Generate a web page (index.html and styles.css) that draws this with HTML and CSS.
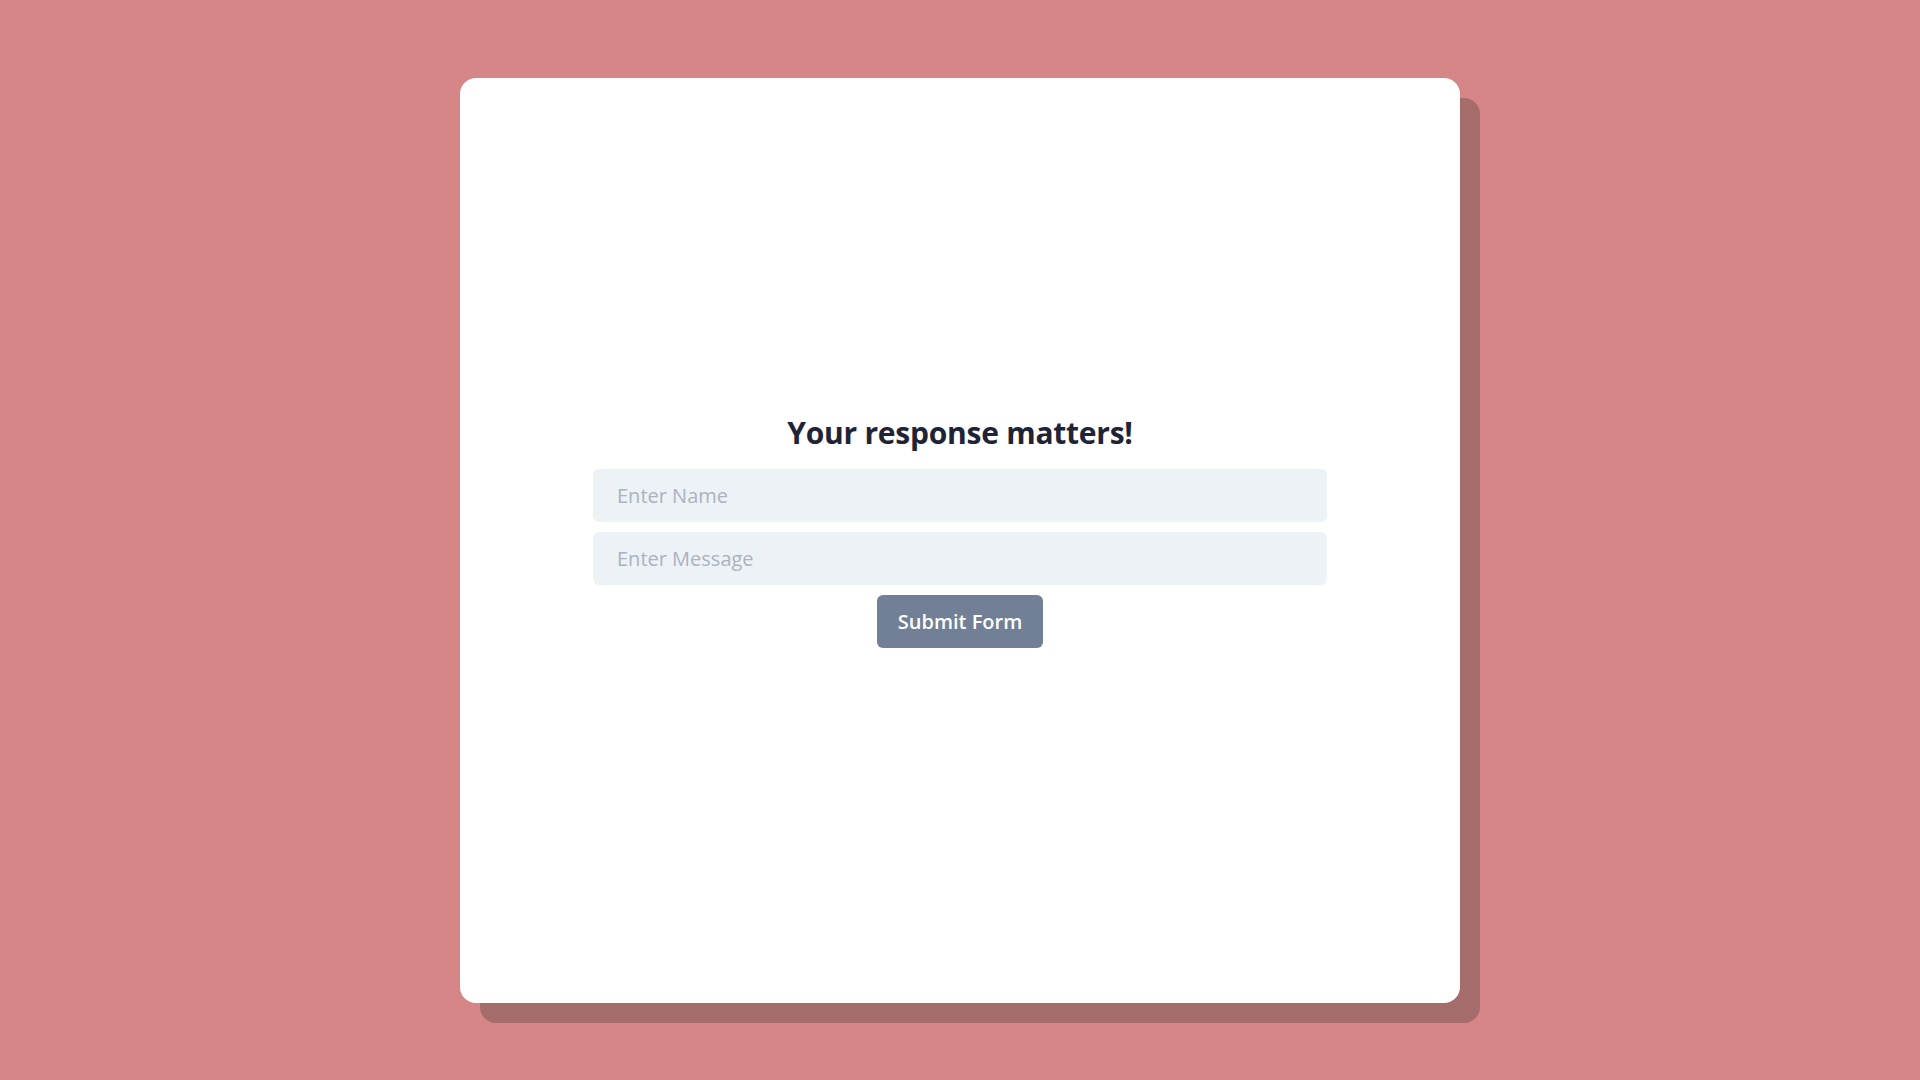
FILE: index.html
```html
<!DOCTYPE html>
<html>
<head>
<meta charset="utf-8">
<link rel="stylesheet" href="styles.css">
</head>
<body>
<div class="page">
  <div class="card">
    <form class="form">
      <h1 class="title">Your response matters!</h1>
      <input class="field" type="text" placeholder="Enter Name">
      <input class="field" type="text" placeholder="Enter Message">
      <button class="btn" type="button">Submit Form</button>
    </form>
  </div>
</div>
</body>
</html>
```
FILE: styles.css
```css
* { box-sizing: border-box; }
html, body { margin: 0; padding: 0; }
body {
  background: #d68686;
  font-family: "Open Sans", "Noto Sans", sans-serif;
}
.page {
  width: 1920px;
  height: 1080px;
  display: flex;
  align-items: center;
  justify-content: center;
}
.card {
  width: 1000px;
  height: 925px;
  background: #ffffff;
  border-radius: 16px;
  box-shadow: 20px 20px 0 #a56c6c;
  display: flex;
  align-items: center;
  justify-content: center;
}
.form {
  width: 734px;
  display: flex;
  flex-direction: column;
  align-items: center;
  gap: 10px;
  margin-top: -17px;
}
.title {
  margin: 0 0 8px;
  font-size: 30px;
  font-weight: 700;
  color: #1f2336;
  line-height: 36px;
  letter-spacing: -0.25px;
}
.field {
  width: 100%;
  height: 53px;
  border: none;
  outline: none;
  border-radius: 6px;
  background: #edf2f7;
  padding: 0 24px;
  font-family: inherit;
  font-size: 20px;
  color: #2d3748;
}
.field::placeholder { color: #aab2bf; }
.btn {
  height: 53px;
  width: 166px;
  border: none;
  border-radius: 6px;
  background: #718096;
  color: #ffffff;
  font-family: inherit;
  font-size: 20px;
  font-weight: 600;
}
```
